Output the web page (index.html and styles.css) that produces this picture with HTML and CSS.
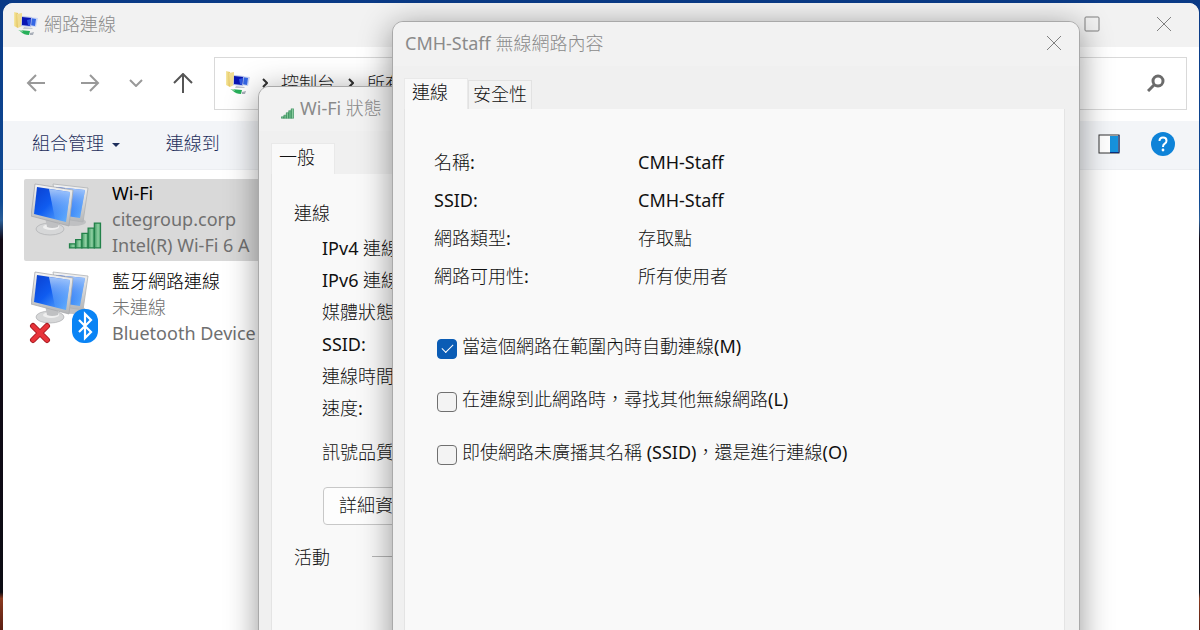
FILE: index.html
```html
<!DOCTYPE html>
<html lang="zh-Hant">
<head>
  <meta charset="UTF-8">
  <meta name="viewport" content="width=device-width, initial-scale=1.0">
  <title>網路連線</title>
  <link rel="stylesheet" href="styles.css">
</head>
<body>
  <svg class="defs" width="0" height="0" aria-hidden="true">
    <defs>
      <linearGradient id="screen" x1="0" y1="0" x2="1" y2="1">
        <stop offset="0" stop-color="#0a3fd0"/>
        <stop offset="0.45" stop-color="#0f5cf0"/>
        <stop offset="1" stop-color="#6cb8ff"/>
      </linearGradient>
      <linearGradient id="shine" x1="0" y1="0" x2="0" y2="1">
        <stop offset="0" stop-color="#d8ecff" stop-opacity="0.75"/>
        <stop offset="1" stop-color="#5aa6ff" stop-opacity="0.1"/>
      </linearGradient>
      <linearGradient id="bars" x1="0" y1="0" x2="1" y2="0">
        <stop offset="0" stop-color="#3f9a63"/>
        <stop offset="0.6" stop-color="#8fd0a2"/>
        <stop offset="1" stop-color="#4aa56d"/>
      </linearGradient>
      <linearGradient id="folder" x1="0" y1="0" x2="1" y2="0">
        <stop offset="0" stop-color="#f7e9a4"/>
        <stop offset="1" stop-color="#e3c45c"/>
      </linearGradient>
      <linearGradient id="metal" x1="0" y1="0" x2="0" y2="1">
        <stop offset="0" stop-color="#f4f4f4"/>
        <stop offset="1" stop-color="#b4b6b8"/>
      </linearGradient>
      <symbol id="monitors" viewBox="0 0 60 54">
        <ellipse cx="43" cy="39" rx="12" ry="4" fill="#bfc0c2"/>
        <path d="M22 1l35 4-5 34-25-4z" fill="url(#metal)" stroke="#b0b2b5" stroke-width="0.8"/>
        <path d="M25 4l29 3-5 28-20-3z" fill="url(#screen)"/>
        <path d="M34 5l20 2-5 28-9-1z" fill="url(#shine)"/>
        <ellipse cx="19" cy="46" rx="14" ry="6" fill="#d6d7d8" stroke="#b3b4b6" stroke-width="0.8"/>
        <ellipse cx="20" cy="44" rx="8" ry="3" fill="#efefef"/>
        <path d="M14 34l13 3 0 7q-6 2-11 0z" fill="#bfc0c2"/>
        <path d="M4 1l38 6-4 36L0 33z" fill="url(#metal)" stroke="#a8aaad" stroke-width="0.8"/>
        <path d="M6 4l33 5-4 30L3 31z" fill="url(#screen)"/>
        <path d="M18 6l21 3-4 30-11-3z" fill="url(#shine)"/>
      </symbol>
      <symbol id="signal" viewBox="0 0 32 26">
        <g fill="url(#bars)" stroke="#23814a" stroke-width="1.2">
          <path d="M1 21h6v4H1z"/>
          <path d="M7 17h6v8H7z"/>
          <path d="M13 11h6v14h-6z"/>
          <path d="M19 6h6v19h-6z"/>
          <path d="M25 1h6v24h-6z"/>
        </g>
      </symbol>
      <symbol id="netfolder" viewBox="0 0 24 24">
        <path d="M0 0l4 1v15l-4-2z" fill="url(#folder)"/>
        <path d="M3 2l5-1v13l-4 2z" fill="#f0dc92"/>
        <path d="M15 5l9 1-2 9-7-1z" fill="#c9d5f5"/>
        <path d="M16 6l6 1-1 7-5-1z" fill="#3567e4"/>
        <path d="M8 4l10 1-1 10-10-1z" fill="#b6c3ec"/>
        <path d="M8 5l9 1-1 8-8-1z" fill="#0916b4"/>
        <path d="M13 8l4-1-1 7-2-1z" fill="#2c55e0"/>
        <path d="M10 15l9 1-1 1-9 0z" fill="#c2c7cf"/>
        <path d="M5 18l11 1-1 4q-5 0-8-3z" fill="#27b05a"/>
        <path d="M4 18l4 0 1 2-3-1z" fill="#a5dcb5"/>
        <path d="M16 21l4-1-1 3-3 0z" fill="#a9afb9"/>
      </symbol>
    </defs>
  </svg>

  <div class="desktop">
    <main class="window explorer">
      <header class="titlebar">
        <svg class="icon-app" viewBox="0 0 24 24"><use href="#netfolder"/></svg>
        <h1 class="title">網路連線</h1>
        <button class="caption-btn" aria-label="最大化">
          <svg width="16" height="16" viewBox="0 0 16 16"><rect x="1" y="1" width="14" height="14" rx="1"/></svg>
        </button>
        <button class="caption-btn" aria-label="關閉">
          <svg width="16" height="16" viewBox="0 0 16 16"><path d="M1 1l14 14M15 1L1 15"/></svg>
        </button>
      </header>

      <nav class="navbar">
        <button class="nav-btn" aria-label="上一頁">
          <svg width="20" height="20" viewBox="0 0 20 20"><path d="M19 10H2M10 2l-8 8 8 8"/></svg>
        </button>
        <button class="nav-btn" aria-label="下一頁">
          <svg width="20" height="20" viewBox="0 0 20 20"><path d="M1 10h17M10 2l8 8-8 8"/></svg>
        </button>
        <button class="nav-btn nav-recent" aria-label="最近的位置">
          <svg width="14" height="8" viewBox="0 0 14 8"><path d="M1 1l6 6 6-6"/></svg>
        </button>
        <button class="nav-btn nav-up" aria-label="上移">
          <svg width="20" height="20" viewBox="0 0 20 20"><path d="M10 20V1M1 10l9-9 9 9"/></svg>
        </button>
        <div class="address">
          <svg class="icon-app" viewBox="0 0 24 24"><use href="#netfolder"/></svg>
          <svg class="chevron" viewBox="0 0 6 10"><path d="M1 1l4 4-4 4"/></svg>
          <a href="#">控制台</a>
          <svg class="chevron" viewBox="0 0 6 10"><path d="M1 1l4 4-4 4"/></svg>
          <a href="#">所有</a>
        </div>
        <div class="search">
          <input type="search" aria-label="搜尋">
          <svg width="18" height="18" viewBox="0 0 18 18"><circle cx="11" cy="7" r="5"/><path d="M7 11l-6 6"/></svg>
        </div>
      </nav>

      <div class="toolbar">
        <button class="tool-btn">組合管理 <span class="caret"></span></button>
        <button class="tool-btn">連線到</button>
        <button class="tool-icon tool-pane" aria-label="預覽窗格">
          <svg width="22" height="20" viewBox="0 0 22 20">
            <rect x="1" y="1" width="20" height="18" fill="#fff" stroke="#333"/>
            <path d="M12 2h8v16h-8z" fill="#1792dc"/>
            <path d="M12 18.500h9V1" fill="none" stroke="#0a2f7c"/>
          </svg>
        </button>
        <button class="tool-icon" aria-label="說明">
          <svg width="26" height="26" viewBox="0 0 26 26">
            <circle cx="13" cy="13" r="12" fill="#0e83d8"/>
            <path d="M9.500 10q0-3.500 3.500-3.500t3.500 3.200q0 1.800-1.800 3T13 16" fill="none" stroke="#fff" stroke-width="2"/>
            <circle cx="13" cy="19" r="1.400" fill="#fff"/>
          </svg>
        </button>
      </div>

      <ul class="adapters">
        <li class="adapter selected">
          <div class="adapter-icon">
            <svg class="monitors" viewBox="0 0 60 54"><use href="#monitors"/></svg>
            <svg class="badge-signal" viewBox="0 0 32 26"><use href="#signal"/></svg>
          </div>
          <div class="adapter-text">
            <strong>Wi-Fi</strong>
            <span>citegroup.corp</span>
            <span>Intel(R) Wi-Fi 6 A</span>
          </div>
        </li>
        <li class="adapter">
          <div class="adapter-icon">
            <svg class="monitors" viewBox="0 0 60 54"><use href="#monitors"/></svg>
            <svg class="badge-off" viewBox="0 0 22 22"><path d="M4 4l14 14M18 4L4 18" stroke="#a81c22" stroke-width="6" stroke-linecap="round"/><path d="M4 4l14 14M18 4L4 18" stroke="#e8343a" stroke-width="4" stroke-linecap="round"/></svg>
            <svg class="badge-bt" viewBox="0 0 26 34"><rect width="26" height="34" rx="12" fill="#0a84f5"/><path d="M7 11l12 12-6 6V5l6 6L7 23" fill="none" stroke="#fff" stroke-width="2.200"/></svg>
          </div>
          <div class="adapter-text">
            <strong>藍牙網路連線</strong>
            <span>未連線</span>
            <span>Bluetooth Device</span>
          </div>
        </li>
      </ul>
    </main>

    <section class="window status">
      <header class="titlebar">
        <svg class="icon-signal" viewBox="0 0 32 26"><use href="#signal"/></svg>
        <h2 class="title">Wi-Fi 狀態</h2>
      </header>
      <div class="tabs">
        <button class="tab active">一般</button>
      </div>
      <div class="panel">
        <h3 class="group">連線</h3>
        <ul class="status-list">
          <li>IPv4 連線</li>
          <li>IPv6 連線</li>
          <li>媒體狀態</li>
          <li>SSID:</li>
          <li>連線時間</li>
          <li>速度:</li>
          <li class="quality">訊號品質</li>
        </ul>
        <button class="details-btn">詳細資料</button>
        <h3 class="group activity">活動</h3>
      </div>
    </section>

    <section class="window properties">
      <header class="titlebar">
        <h2 class="title">CMH-Staff 無線網路內容</h2>
        <button class="caption-btn" aria-label="關閉">
          <svg width="16" height="16" viewBox="0 0 16 16"><path d="M1 1l14 14M15 1L1 15"/></svg>
        </button>
      </header>
      <div class="tabs">
        <button class="tab active">連線</button>
        <button class="tab">安全性</button>
      </div>
      <div class="panel">
        <dl class="info">
          <dt>名稱:</dt><dd>CMH-Staff</dd>
          <dt>SSID:</dt><dd>CMH-Staff</dd>
          <dt>網路類型:</dt><dd>存取點</dd>
          <dt>網路可用性:</dt><dd>所有使用者</dd>
        </dl>
        <form class="options">
          <label class="option"><input type="checkbox" checked><span>當這個網路在範圍內時自動連線(M)</span></label>
          <label class="option"><input type="checkbox"><span>在連線到此網路時，尋找其他無線網路(L)</span></label>
          <label class="option"><input type="checkbox"><span>即使網路未廣播其名稱 (SSID)，還是進行連線(O)</span></label>
        </form>
      </div>
    </section>
  </div>
</body>
</html>
```

FILE: styles.css
```css
* {
  box-sizing: border-box;
}
body {
  margin: 0;
  font-family: "Noto Sans", "Noto Sans CJK TC Light", "Noto Sans CJK TC", sans-serif;
  font-size: 18px;
  font-weight: 400;
  line-height: 26px;
  color: #111;
}
h1, h2, h3, ul, dl, dd {
  margin: 0;
  padding: 0;
  font-size: 18px;
  font-weight: 400;
  list-style: none;
}
button {
  padding: 0;
  border: none;
  background: none;
  font: inherit;
  color: inherit;
}
svg {
  display: block;
  flex: none;
}
.defs {
  position: absolute;
}
.desktop {
  position: relative;
  height: 100vh;
  overflow: hidden;
  background: linear-gradient(#0a3a86, #0f4a94 32%, #2a5d96 35%, #120a16 38%, #0c0c14 94%, #8a3a20 95%, #5a1e12);
}

/* windows */
.window {
  position: absolute;
  overflow: hidden;
  background: #f0f0f0;
}
.titlebar {
  display: flex;
  align-items: center;
  height: 44px;
  padding-bottom: 2px;
  background: #f2f2f2;
  color: #8a8a8a;
}
.title {
  white-space: nowrap;
}
.caption-btn {
  display: flex;
  align-items: center;
  justify-content: center;
  width: 48px;
  height: 40px;
}
.caption-btn svg {
  fill: none;
  stroke: #808080;
}
.icon-app {
  width: 24px;
  height: 24px;
}

/* explorer */
.explorer {
  top: 3px;
  right: 1px;
  bottom: -10px;
  left: 3px;
  border-radius: 10px;
  background: #fff;
}
.explorer .titlebar {
  gap: 6px;
  padding: 0 11px 2px;
}
.explorer .title {
  flex: 1;
}
.explorer .caption-btn + .caption-btn {
  margin-left: 18px;
}
.navbar {
  display: flex;
  align-items: center;
  height: 74px;
  padding: 0 12px 2px 23px;
}
.nav-btn {
  margin-right: 34px;
}
.nav-btn svg {
  fill: none;
  stroke: #999;
  stroke-width: 2;
}
.nav-recent {
  margin-left: -5px;
  margin-right: 30px;
}
.nav-btn.nav-up {
  margin-right: 21px;
}
.nav-up svg {
  stroke: #555;
}
.address, .search {
  display: flex;
  align-items: center;
  height: 53px;
  border: 1px solid #d9d9d9;
}
.address {
  flex: 3;
  padding-left: 11px;
}
.address a {
  margin: 0 13px;
  color: #222;
  text-decoration: none;
  white-space: nowrap;
}
.chevron {
  width: 6px;
  height: 10px;
  margin-left: 12px;
  fill: none;
  stroke: #333;
  stroke-width: 2;
}
.address a + .chevron {
  margin-left: 0;
}
.search {
  flex: 1;
  margin-left: 12px;
  padding-right: 21px;
}
.search input {
  flex: 1;
  min-width: 0;
  border: none;
  outline: none;
  font: inherit;
}
.search svg {
  fill: none;
  stroke: #6b6b6b;
  stroke-width: 3;
}
.toolbar {
  display: flex;
  align-items: center;
  gap: 46px;
  height: 49px;
  padding: 0 23px 2px 29px;
  background: #f3f5f8;
  border-bottom: 1px solid #eceef1;
  color: #1e2f5c;
}
.tool-btn {
  padding-bottom: 2px;
}
.caret {
  display: inline-block;
  margin: 0 0 3px 3px;
  border: 4px solid transparent;
  border-top-color: #1e2f5c;
  border-bottom: none;
}
.tool-pane {
  margin-left: auto;
}
.tool-icon + .tool-icon {
  margin-left: -16px;
}
.adapters {
  width: 320px;
  margin: 9px 0 0 21px;
}
.adapter {
  display: flex;
  height: 82px;
  margin-bottom: 6px;
  border-radius: 2px;
}
.adapter.selected {
  background: #d9d9d9;
}
.adapter-icon {
  position: relative;
  flex: none;
  width: 88px;
  padding: 4px 0 0 7px;
}
.monitors {
  width: 60px;
  height: 54px;
}
.badge-signal {
  position: absolute;
  left: 44px;
  top: 43px;
  width: 34px;
  height: 27px;
}
.badge-off {
  position: absolute;
  left: 5px;
  top: 55px;
  width: 22px;
  height: 22px;
}
.badge-bt {
  position: absolute;
  left: 48px;
  top: 42px;
  width: 26px;
  height: 34px;
}
.adapter-text {
  display: flex;
  flex-direction: column;
  padding-top: 1px;
  white-space: nowrap;
  color: #707070;
}
.adapter-text strong {
  font-weight: 400;
  color: #000;
}

/* dialogs */
.status, .properties {
  border: 1px solid #a9a9a9;
  border-radius: 11px;
  box-shadow: 0 6px 32px rgba(0, 0, 0, 0.42);
}
.tabs {
  display: flex;
  align-items: flex-end;
}
.tab {
  height: 29px;
  padding-bottom: 2px;
  border: 1px solid #e2e2e2;
  border-bottom: none;
  background: #f3f3f3;
}
.tab.active {
  height: 31px;
  padding-bottom: 4px;
  border-color: #e9e9e9;
  background: #f9f9f9;
}
.panel {
  height: 100%;
  border: 1px solid #e4e4e4;
  border-top: none;
  background: #f9f9f9;
}
.status {
  top: 86px;
  bottom: -60px;
  left: 258px;
  width: 46%;
  padding: 0 12px;
}
.status .titlebar {
  gap: 6px;
  margin: 0 -12px;
  padding-left: 22px;
}
.icon-signal {
  width: 13px;
  height: 11px;
  margin-top: 10px;
}
.status .tabs {
  padding-top: 12px;
}
.status .tab {
  width: 64px;
  padding-right: 12px;
}
.status .panel {
  padding: 26px 22px;
}
.status-list {
  margin: 6px 0 0 28px;
  line-height: 32px;
}
.status-list .quality {
  margin-top: 12px;
}
.details-btn {
  display: block;
  height: 38px;
  margin: 19px 0 0 29px;
  padding: 0 15px 2px;
  border: 1px solid #c8c8c8;
  border-radius: 4px;
  background: #fdfdfd;
}
.activity {
  display: flex;
  align-items: center;
  gap: 42px;
  margin-top: 19px;
}
.activity::after {
  content: "";
  flex: 1;
  height: 1px;
  margin-bottom: 2px;
  background: #b5b5b5;
}
.properties {
  top: 21px;
  right: 120px;
  bottom: -60px;
  left: 392px;
  padding: 0 14px 0 11px;
}
.properties .titlebar {
  justify-content: space-between;
  margin: 0 -14px 0 -11px;
  padding: 0 1px 2px 12px;
}
.properties .tabs {
  padding-top: 12px;
}
.properties .tab {
  width: 64px;
}
.properties .tab.active {
  padding-right: 12px;
}
.properties .panel {
  padding: 40px 29px;
}
.info {
  display: grid;
  grid-template-columns: 204px 1fr;
  row-gap: 12px;
}
.options {
  display: grid;
  gap: 27px;
  margin-top: 44px;
}
.option {
  display: flex;
  align-items: flex-start;
  gap: 5px;
  padding-left: 3px;
}
.option input {
  appearance: none;
  flex: none;
  display: grid;
  place-items: center;
  width: 20px;
  height: 20px;
  margin: 6px 0 0;
  border: 1px solid #707070;
  border-radius: 4px;
  background: #f3f3f3;
}
.option input:checked {
  border-color: #0a5cb5;
  background: #0a5cb5;
}
.option input:checked::after {
  content: "";
  width: 10px;
  height: 5px;
  margin-bottom: 4px;
  border: solid #fff;
  border-width: 0 0 1px 1px;
  rotate: -45deg;
}
```
